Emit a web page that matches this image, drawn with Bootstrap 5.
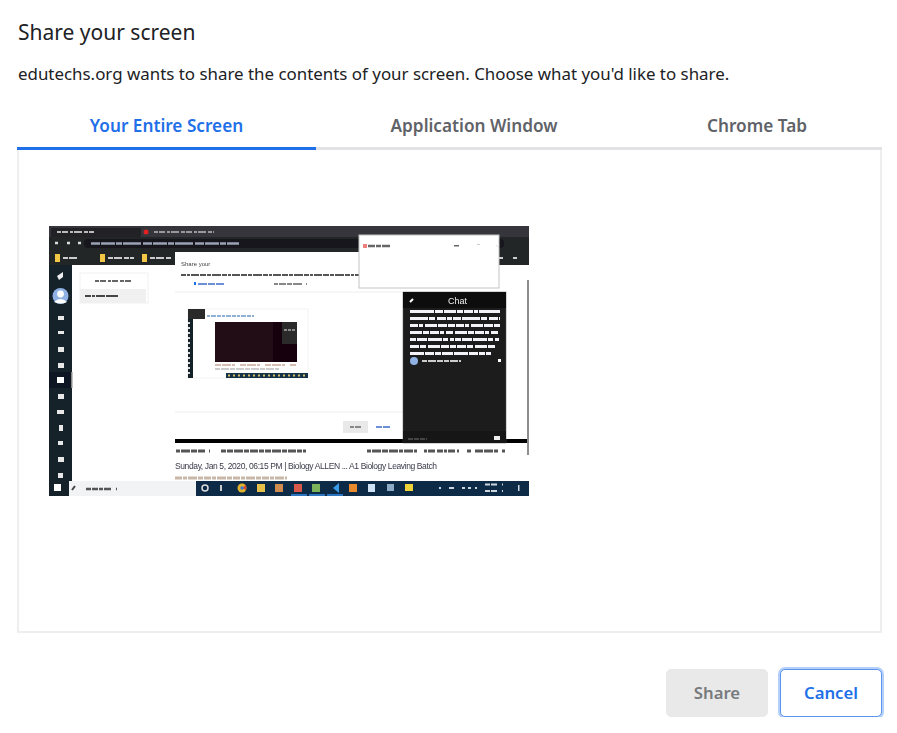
<!DOCTYPE html>
<html lang="en">

<head>
    <meta charset="UTF-8" />
    <meta name="viewport" content="width=device-width, initial-scale=1.0" />
    <title>Share your screen</title>
    <link href="https://cdn.jsdelivr.net/npm/bootstrap@5.3.5/dist/css/bootstrap.min.css" rel="stylesheet" />
    <style>
        body { font-family: "Noto Sans", "Open Sans", sans-serif; color: #202124; background: #fff; }
        .share-dialog { padding: 0 15px 0 17px; }
        .share-title { font-size: 21px; font-weight: 400; line-height: 28px; margin: 0; padding: 18px 0 0 1px; }
        .share-text { font-size: 16.9px; line-height: 22px; margin: 0; padding: 17px 0 0 1px; white-space: nowrap; }
        .share-tabs { margin-top: 14px; }
        .share-tabs .nav-item:nth-child(1) { flex: 0 0 299px; }
        .share-tabs .nav-item:nth-child(2) { flex: 0 0 316px; }
        .share-tabs .nav-link { font-size: 17.2px; font-weight: 600; line-height: 22px; color: #5f6368; padding: 16px 0 10px; border-bottom: 3px solid #e3e3e6; border-radius: 0; }
        .share-tabs .nav-link.active { color: #1f6fe8; border-bottom-color: #1f6fe8; }
        .share-panel { height: 483px; border: 2px solid #eeeeee; border-top: 0; padding: 76px 0 0 30px; }
        .screen-thumb { display: block; width: 480px; height: 270px; }
        .share-actions { padding-top: 36px; gap: 12px; }
        .share-actions .btn { width: 102px; height: 48px; font-size: 16.7px; font-weight: 600; border-radius: 5px; padding: 0; }
        .btn-share, .btn-share:disabled { background: #e9e9e9; border-color: #e9e9e9; color: #777a7d; opacity: 1; }
        .btn-stop { background: #fff; border: 1px solid #5a94ee; color: #1f6fe8; box-shadow: 0 0 0 2px #b4cff8; }
    </style>
</head>

<body>

    <div class="share-dialog">
        <h1 class="share-title">Share your screen</h1>
        <p class="share-text">edutechs.org wants to share the contents of your screen. Choose what you'd like to share.</p>

        <ul class="nav nav-fill share-tabs">
            <li class="nav-item"><a class="nav-link active" href="#">Your Entire Screen</a></li>
            <li class="nav-item"><a class="nav-link" href="#">Application Window</a></li>
            <li class="nav-item"><a class="nav-link" href="#">Chrome Tab</a></li>
        </ul>

        <div class="share-panel">
            <!-- thumbnail of the shared desktop, unreadable in the original so most text is just dashes -->
            <svg class="screen-thumb" viewBox="0 0 480 270" xmlns="http://www.w3.org/2000/svg" font-family="Liberation Sans, sans-serif">
                <defs>
                    <filter id="soft" x="0" y="0" width="100%" height="100%"><feGaussianBlur stdDeviation="0.7" /></filter>
                </defs>
                <g filter="url(#soft)">
                    <rect width="480" height="270" fill="#fff" />

                    <!-- browser chrome -->
                    <rect width="480" height="11" fill="#35363a" />
                    <rect x="2" y="2" width="90" height="9" fill="#222326" />
                    <circle cx="97" cy="6" r="2.500" fill="#e02020" />
                    <line x1="8" x2="45" y1="6" y2="6" stroke="#bbb" stroke-width="2" stroke-dasharray="4 1 6 2 3 1 8 2" />
                    <line x1="105" x2="165" y1="6" y2="6" stroke="#999" stroke-width="2" stroke-dasharray="4 1 6 2 3 1 8 2" />
                    <rect y="11" width="480" height="28" fill="#242528" />
                    <rect x="35" y="13" width="420" height="9" rx="4" fill="#15161a" />
                    <line x1="42" x2="190" y1="17.500" y2="17.500" stroke="#9aa3b5" stroke-width="2.400" stroke-dasharray="9 1 14 1 6 1 18 2" />
                    <path d="M6 17h3M18 17h3M29 17h3" stroke="#ddd" stroke-width="2.500" />
                    <rect x="6" y="28" width="5" height="8" fill="#f2c744" />
                    <line x1="14" x2="30" y1="32" y2="32" stroke="#ccc" stroke-width="2" stroke-dasharray="5 1 8 2" />
                    <rect x="51" y="28" width="5" height="8" fill="#f2c744" />
                    <line x1="59" x2="85" y1="32" y2="32" stroke="#ccc" stroke-width="2" stroke-dasharray="5 1 8 2" />
                    <rect x="93" y="28" width="5" height="8" fill="#f2c744" />
                    <line x1="101" x2="122" y1="32" y2="32" stroke="#ccc" stroke-width="2" stroke-dasharray="5 1 8 2" />
                    <line x1="440" x2="470" y1="32" y2="32" stroke="#ccc" stroke-width="2" stroke-dasharray="7 2 5 10 4" />

                    <!-- app sidebar -->
                    <rect y="39" width="23" height="216" fill="#13202c" />
                    <circle cx="11.500" cy="70" r="8" fill="#8fb1e3" />
                    <circle cx="11.500" cy="68" r="3.400" fill="#fff" />
                    <path d="M5 76q6.500-6 13 0v0q-6 3-13 0z" fill="#fff" />
                    <path d="M8 50l6-4v5l-4 3z" fill="#eee" />
                    <rect y="146" width="23" height="16" fill="#0d1720" />
                    <g fill="#e8e8e8">
                        <rect x="9" y="90" width="6" height="4" />
                        <rect x="9" y="105" width="6" height="3" />
                        <rect x="9" y="121" width="6" height="5" />
                        <rect x="9" y="137" width="6" height="5" />
                        <rect x="8" y="151" width="7" height="6" fill="#fff" />
                        <rect x="9" y="168" width="6" height="5" />
                        <rect x="8" y="184" width="7" height="4" />
                        <rect x="10" y="199" width="4" height="6" />
                        <rect x="9" y="215" width="5" height="4" />
                        <rect x="9" y="231" width="6" height="5" />
                        <rect x="9" y="247" width="5" height="5" />
                    </g>
                    <rect x="22" y="146" width="1.500" height="16" fill="#888" />

                    <!-- app menu -->
                    <rect x="31" y="47" width="68" height="30" fill="#fff" stroke="#f1f1f1" />
                    <rect x="31" y="63" width="66" height="14" fill="#f0f0f0" />
                    <line x1="46" x2="82" y1="55" y2="55" stroke="#666" stroke-width="2" stroke-dasharray="4 1 6 2 3 1 6 2" />
                    <line x1="36" x2="73" y1="70" y2="70" stroke="#444" stroke-width="2" stroke-dasharray="6 1 3 1 9 1 12" />

                    <!-- nested share dialog -->
                    <rect x="126" y="26" width="228" height="187" fill="#fff" />
                    <rect x="126" y="213" width="354" height="4" fill="#050505" />
                    <text x="132" y="40" font-size="6" fill="#444">Share your</text>
                    <line x1="132" x2="310" y1="49" y2="49" stroke="#555" stroke-width="2" stroke-dasharray="5 1 3 1 8 1 6 1 4 1 9 1" />
                    <rect x="145" y="56" width="2" height="3" fill="#1f6fe8" />
                    <line x1="149" x2="184" y1="58" y2="58" stroke="#6d8fd8" stroke-width="2" stroke-dasharray="9 1 7 1 8" />
                    <line x1="225" x2="262" y1="58" y2="58" stroke="#888" stroke-width="2" stroke-dasharray="4 1 7 1 5 1 9" />
                    <line x1="126" x2="354" y1="66" y2="66" stroke="#eee" />
                    <line x1="126" x2="354" y1="186" y2="186" stroke="#eee" />
                    <rect x="294" y="195" width="25" height="12" fill="#e9e9e9" />
                    <line x1="301" x2="312" y1="201" y2="201" stroke="#888" stroke-width="2" stroke-dasharray="4 1 6" />
                    <line x1="327" x2="341" y1="201" y2="201" stroke="#6d8fd8" stroke-width="2" stroke-dasharray="6 1 7" />

                    <!-- thumbnail inside the thumbnail -->
                    <rect x="139" y="83" width="120" height="69" fill="#fff" stroke="#e6e6e6" stroke-width="0.500" />
                    <rect x="139" y="83" width="17" height="10" fill="#2a2a2a" />
                    <rect x="139" y="93" width="5" height="59" fill="#13202c" />
                    <path d="M140 96v52" stroke="#ddd" stroke-width="2" stroke-dasharray="2 3" />
                    <line x1="158" x2="205" y1="90" y2="90" stroke="#8fb1d8" stroke-width="2" stroke-dasharray="3 1 5 1 4 1" />
                    <rect x="166" y="96" width="82" height="40" fill="#12060a" />
                    <rect x="166" y="96" width="58" height="40" fill="#220b12" />
                    <rect x="233" y="96" width="15" height="22" fill="#2a2a2a" />
                    <line x1="235" x2="246" y1="104" y2="104" stroke="#aaa" stroke-width="1.500" stroke-dasharray="3 1" />
                    <line x1="166" x2="248" y1="139" y2="139" stroke="#c8a898" stroke-width="1.500" stroke-dasharray="6 1 9 1 3 5" />
                    <line x1="166" x2="230" y1="143" y2="143" stroke="#999" stroke-width="1.200" stroke-dasharray="5 1 8 1" />
                    <rect x="177" y="147" width="82" height="5" fill="#14304a" />
                    <line x1="179" x2="257" y1="149.500" y2="149.500" stroke="#d9c26a" stroke-width="2" stroke-dasharray="2 3" />

                    <!-- chat panel -->
                    <rect x="354" y="66" width="103" height="151" fill="#1f1f1f" stroke="#555" stroke-width="0.500" />
                    <rect x="354" y="66" width="103" height="16" fill="#111" />
                    <path d="M361 76l3-3" stroke="#fff" stroke-width="2" />
                    <text x="399" y="78" font-size="9" fill="#eee">Chat</text>
                    <g stroke="#f2f2f8" stroke-width="2.800">
                        <line x1="361" x2="451" y1="85.500" y2="85.500" stroke-dasharray="24 1 8 1 12 1 6 1 9 1 4 1" />
                        <line x1="361" x2="451" y1="92.500" y2="92.500" stroke-dasharray="18 1 6 2 9 1 5 1 8 1" />
                        <line x1="361" x2="451" y1="99.500" y2="99.500" stroke-dasharray="8 1 4 2 12 1 9 1 7 1" />
                        <line x1="361" x2="451" y1="106.500" y2="106.500" stroke-dasharray="12 1 6 1 9 1 4 2 7 2" />
                        <line x1="361" x2="451" y1="113.500" y2="113.500" stroke-dasharray="6 1 10 1 14 1 5 2 4 1" />
                        <line x1="361" x2="446" y1="120.500" y2="120.500" stroke-dasharray="9 1 6 2 12 1 8 1 6 1" />
                        <line x1="361" x2="442" y1="127.500" y2="127.500" stroke-dasharray="14 1 9 1 6 1 11 1" />
                    </g>
                    <circle cx="365" cy="135" r="4" fill="#8fb1e3" />
                    <line x1="373" x2="412" y1="135" y2="135" stroke="#ccc" stroke-width="2" stroke-dasharray="5 1 8 1 6 1" />
                    <rect x="449" y="133" width="3" height="3" fill="#fff" />
                    <rect x="354" y="205" width="103" height="12" fill="#151515" />
                    <line x1="359" x2="378" y1="213" y2="213" stroke="#777" stroke-dasharray="5 1 5 1" />
                    <rect x="445" y="210" width="6" height="4" fill="#eee" />

                    <!-- floating popup -->
                    <rect x="310" y="9" width="140" height="53" fill="#fff" stroke="#c4c4c4" />
                    <line x1="314" x2="345" y1="20" y2="20" stroke="#666" stroke-width="2.500" stroke-dasharray="4 1 7 1 5 1 8" />
                    <rect x="314" y="18" width="4" height="4" fill="#ef7f7f" />
                    <rect x="405" y="19" width="5" height="1.500" fill="#666" />
                    <rect x="428" y="18" width="3" height="1" fill="#ccc" />
                    <path d="M447 19l3 3" stroke="#ddd" />

                    <!-- page below the player -->
                    <rect x="478" y="54" width="2" height="175" fill="#8d8d8d" />
                    <g stroke="#555" stroke-width="3">
                        <line x1="127" x2="162" y1="225" y2="225" stroke-dasharray="4 1 9 1 6 1 7" />
                        <line x1="172" x2="257" y1="225" y2="225" stroke-dasharray="5 1 6 1 9 1 5 1 8 1" />
                        <line x1="318" x2="368" y1="225" y2="225" stroke-dasharray="4 1 9 1 6 1 9 1" />
                        <line x1="375" x2="410" y1="225" y2="225" stroke-dasharray="3 1 7 2 6 1" />
                        <line x1="418" x2="456" y1="225" y2="225" stroke-dasharray="4 4 8 1 9 1" />
                    </g>
                    <text x="126" y="243" font-size="8.500" fill="#3a3a4a" textLength="262">Sunday, Jan 5, 2020, 06:15 PM | Biology ALLEN ... A1 Biology Leaving Batch</text>
                    <line x1="126" x2="238" y1="252" y2="252" stroke="#c8b8a8" stroke-width="3" stroke-dasharray="7 1 4 1 9 1 5 1" />

                    <!-- windows taskbar -->
                    <rect y="255" width="20" height="15" fill="#13202c" />
                    <rect x="5" y="258" width="7" height="7" fill="#fff" />
                    <rect x="20" y="255" width="127" height="15" fill="#f2f3f4" />
                    <line x1="37" x2="73" y1="263" y2="263" stroke="#555" stroke-width="2.500" stroke-dasharray="5 1 6 1 4 1 7" />
                    <path d="M23 264l3-4" stroke="#444" stroke-width="2" />
                    <rect x="147" y="255" width="333" height="15" fill="#0f2b46" />
                    <circle cx="156" cy="262" r="3" fill="none" stroke="#ddd" stroke-width="1.500" />
                    <rect x="171" y="259" width="2" height="6" fill="#ccc" />
                    <circle cx="193" cy="262" r="4.500" fill="#e2b32b" />
                    <path d="M193 262l4-3v5z" fill="#d94436" />
                    <circle cx="193" cy="262" r="1.700" fill="#3b78d8" />
                    <rect x="208" y="258" width="8" height="8" fill="#e6c04a" />
                    <rect x="226" y="258" width="8" height="8" fill="#d08c50" />
                    <rect x="245" y="258" width="8" height="8" fill="#d8584a" />
                    <rect x="263" y="258" width="8" height="8" fill="#7cb35a" />
                    <path d="M284 262l6-5v10z" fill="#3b9be8" />
                    <rect x="300" y="258" width="8" height="8" fill="#ea8a2e" />
                    <rect x="319" y="258" width="7" height="8" fill="#cfe2f5" />
                    <rect x="338" y="258" width="7" height="7" fill="#8faac4" />
                    <rect x="356" y="258" width="8" height="7" fill="#efd437" />
                    <g fill="#2f74c0">
                        <rect x="242" y="268" width="16" height="2" />
                        <rect x="260" y="268" width="16" height="2" />
                        <rect x="278" y="268" width="16" height="2" />
                    </g>
                    <line x1="390" x2="431" y1="262" y2="262" stroke="#cdd6df" stroke-width="2" stroke-dasharray="2 8 5 8 3 3 3 4" />
                    <line x1="436" x2="458" y1="258.500" y2="258.500" stroke="#cdd6df" stroke-width="2" stroke-dasharray="5 1 6" />
                    <line x1="436" x2="458" y1="265" y2="265" stroke="#cdd6df" stroke-width="2" stroke-dasharray="5 1 6" />
                    <rect x="469" y="259" width="1.500" height="6" fill="#cdd6df" />
                </g>
            </svg>
        </div>

        <div class="d-flex justify-content-end share-actions">
            <button type="button" class="btn btn-share" disabled>Share</button>
            <button type="button" class="btn btn-stop">Cancel</button>
        </div>
    </div>

    <script src="https://cdn.jsdelivr.net/npm/bootstrap@5.3.5/dist/js/bootstrap.bundle.min.js"></script>
</body>

</html>
